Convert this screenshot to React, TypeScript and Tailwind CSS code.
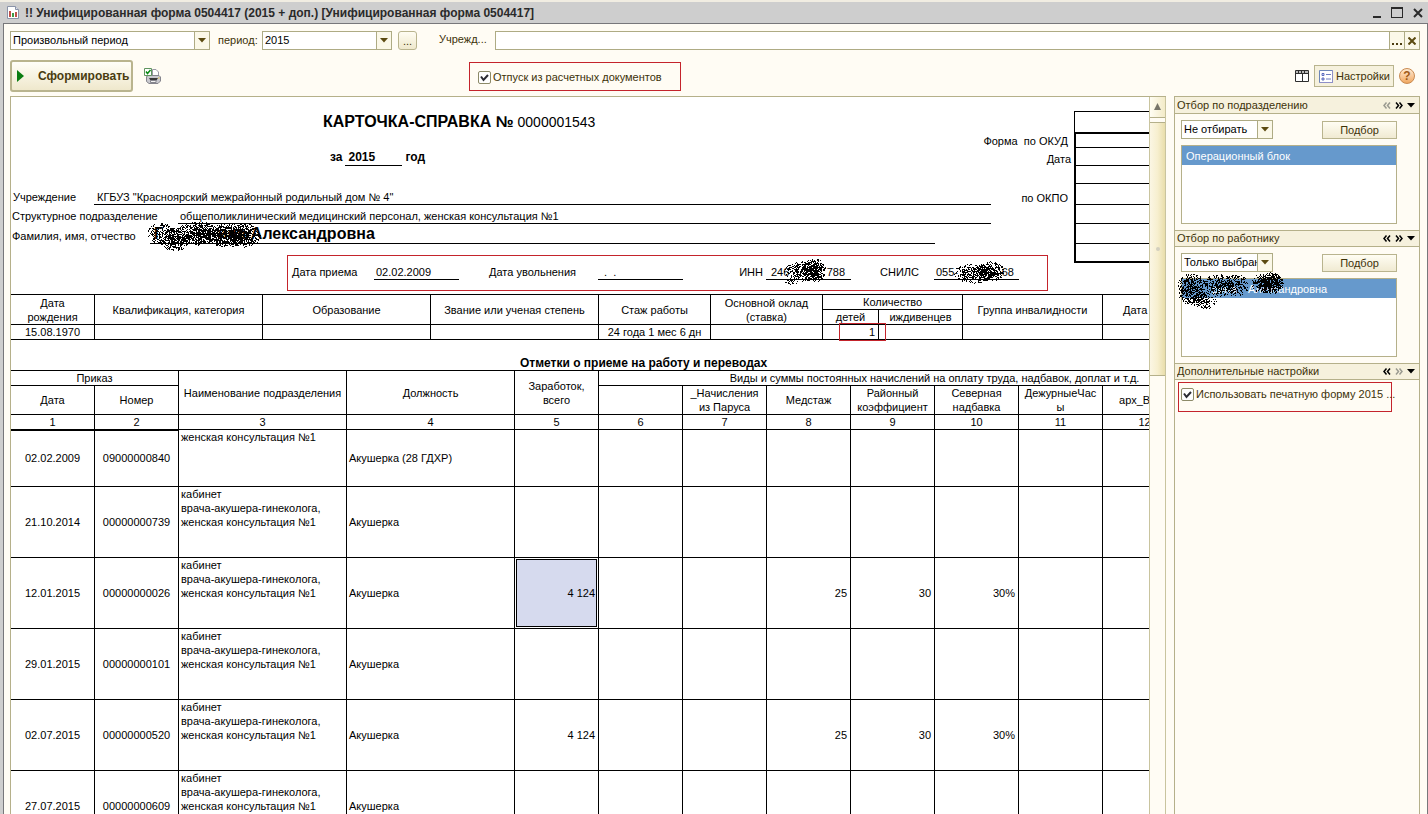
import { useId, useState, type ReactNode } from "react";

const UI_FONT = "font-['Liberation_Sans',Arial,sans-serif]";

/* ---------- small drawings ---------- */

function ArrowDown({ className = "" }: { className?: string }) {
  return (
    <svg width="8" height="5" viewBox="0 0 8 5" className={className} aria-hidden="true">
      <path d="M0 0h8L4 4.5z" fill="currentColor" />
    </svg>
  );
}

function Chevrons({ flip = false, dim = false }: { flip?: boolean; dim?: boolean }) {
  return (
    <svg width="8" height="7" viewBox="0 0 8 7" aria-hidden="true" className={flip ? "-scale-x-100" : ""}>
      <path
        d="M3.5 .5l-2.5 3 2.5 3M7 .5l-2.5 3L7 6.5"
        fill="none"
        stroke={dim ? "#9a9a90" : "#000"}
        strokeWidth="1.5"
      />
    </svg>
  );
}

function ReportIcon() {
  return (
    <svg width="12" height="13" viewBox="0 0 12 13" aria-hidden="true">
      <path d="M.5 .5h8l3 3v9H.5z" fill="#fff" stroke="#8a93a8" />
      <path d="M8.5 .5v3h3" fill="#dfe4ee" stroke="#8a93a8" />
      <path d="M2 5h2v6H2z" fill="#c0504b" />
      <path d="M5 7h2v4H5z" fill="#3f9b46" />
      <path d="M8 6h2v5H8z" fill="#c0504b" />
    </svg>
  );
}

function PrinterIcon() {
  return (
    <svg width="17" height="16" viewBox="0 0 17 16" aria-hidden="true">
      <path d="M8.5 1.5h3.5l2.5 2.5v5h-6z" fill="#fff" stroke="#9a9aa4" />
      <path d="M2.5 8.500l2-1h10.500l1.500 1.500v4l-2.500 2.500H5l-2.500-2z" fill="#c9c9cf" stroke="#85858d" />
      <path d="M5 10h9l-1.500 2.500h-6z" fill="#3a3a3a" />
      <path d="M6.500 12.500h5.500v2h-5.500z" fill="#f4f4f4" stroke="#85858d" />
      <path d="M14 9.500h1.500v1H14z" fill="#e0c040" />
      <path d="M.5 .5h7v7h-7z" fill="#fff" stroke="#5f955f" />
      <path d="M2 3.500l1.500 2L6.500 2" fill="none" stroke="#0a8a14" strokeWidth="1.500" />
    </svg>
  );
}

function TableIcon() {
  return (
    <svg width="14" height="12" viewBox="0 0 14 12" aria-hidden="true">
      <path d="M.5 .5h13v11H.5z" fill="#fff" stroke="#2e2e2e" />
      <path d="M1 1h12v2.500H1z" fill="#b9b9b9" />
      <path d="M.5 3.500h13M7.500 3.500v8" stroke="#2e2e2e" fill="none" />
      <path d="M3.500 1v2M6.500 1v2M9.500 1v2" stroke="#2e2e2e" fill="none" />
    </svg>
  );
}

function SettingsIcon() {
  return (
    <svg width="14" height="13" viewBox="0 0 14 13" aria-hidden="true">
      <path d="M.5 .5h13v12H.5z" fill="#fff" stroke="#6d86b8" />
      <path d="M.5 12.500h13V.5" fill="none" stroke="#8f8fc8" />
      <path d="M3 3.500h2v2H3zM3 8h2v2H3z" fill="#dfe6ff" stroke="#3c4fb0" strokeWidth=".8" />
      <path d="M7 4.500h5M7 9h5" stroke="#6d7cc0" fill="none" />
    </svg>
  );
}

type Blob = { cx: number; cy: number; rx: number; ry: number; density: number };

// Speckled marker strokes, seeded so that they come out the same on every render
function specklePath(blobs: Blob[], seed: number) {
  let s = seed;
  const rnd = () => {
    s = (s * 1664525 + 1013904223) % 4294967296;
    return s / 4294967296;
  };
  let d = "";
  for (const b of blobs) {
    for (let y = -b.ry; y <= b.ry; y++) {
      for (let x = -b.rx; x <= b.rx; x++) {
        const r = (x / b.rx) ** 2 + (y / b.ry) ** 2;
        if (r > 1) continue;
        if (rnd() < b.density * (1.15 - r * 0.7)) d += `M${b.cx + x} ${b.cy + y}h1v1h-1z`;
      }
    }
  }
  return d;
}

function Scribble({ w, h, blobs, seed, className }: { w: number; h: number; blobs: Blob[]; seed: number; className: string }) {
  return (
    <svg
      width={w}
      height={h}
      viewBox={`0 0 ${w} ${h}`}
      shapeRendering="crispEdges"
      aria-hidden="true"
      className={`pointer-events-none absolute ${className}`}
    >
      <path d={specklePath(blobs, seed)} fill="#000" />
    </svg>
  );
}

/* ---------- controls ---------- */

function Combo({ label, options, className }: { label: string; options: string[]; className: string }) {
  return (
    <div className={`relative flex h-[19px] shrink-0 overflow-hidden border border-[#aeab84] bg-white ${className}`}>
      <select
        aria-label={label}
        className="w-full appearance-none bg-transparent pl-[2px] text-[11px] leading-[17px] text-black outline-none"
      >
        {options.map((o) => (
          <option key={o}>{o}</option>
        ))}
      </select>
      <span className="pointer-events-none flex w-[15px] shrink-0 items-center justify-center border-l border-[#aeab84] bg-[#fbf8e8] text-[#5b4a10]">
        <ArrowDown />
      </span>
    </div>
  );
}

function CheckBox({ label, className = "" }: { label: string; className?: string }) {
  const id = useId();
  const [on, setOn] = useState(true);
  return (
    <div className={`flex items-center gap-[2px] border border-[#c4242c] whitespace-nowrap ${className}`}>
      <span className="relative flex size-[13px] shrink-0">
        <input
          id={id}
          type="checkbox"
          checked={on}
          onChange={(e) => setOn(e.target.checked)}
          className="size-[13px] appearance-none rounded-[2px] border border-[#8c8a68] bg-white"
        />
        {on && (
          <svg width="13" height="13" viewBox="0 0 13 13" className="pointer-events-none absolute inset-0" aria-hidden="true">
            <path d="M3 5.500l2.500 3.500L10 4" fill="none" stroke="#2b2b33" strokeWidth="2" />
          </svg>
        )}
      </span>
      <label htmlFor={id}>{label}</label>
    </div>
  );
}

function PickButton() {
  return (
    <button
      type="button"
      className="h-[18px] w-[75px] border border-[#b9b48e] bg-linear-to-b from-[#fffdf3] to-[#f0ead2] leading-[16px]"
    >
      Подбор
    </button>
  );
}

function Section({
  title,
  first = false,
  last = false,
  children,
}: {
  title: string;
  first?: boolean;
  last?: boolean;
  children: ReactNode;
}) {
  return (
    <section>
      <header
        className={`flex h-[17px] items-center gap-[4px] border-b border-[#b5b08a] bg-[#f6f1dd] pr-[4px] pl-[2px] ${
          first ? "" : "border-t"
        }`}
      >
        <h2 className="flex-1 truncate leading-[15px]">{title}</h2>
        <button type="button" aria-label="Вверх">
          <Chevrons dim={first} />
        </button>
        <button type="button" aria-label="Вниз">
          <Chevrons flip dim={last} />
        </button>
        <button type="button" aria-label="Меню" className="text-black">
          <ArrowDown />
        </button>
      </header>
      {children}
    </section>
  );
}

/* ---------- printed form ---------- */

function FormRow({
  height,
  code = "",
  label,
  children,
}: {
  height: string;
  code?: string;
  label?: string;
  children?: ReactNode;
}) {
  return (
    <div className={`flex ${height}`}>
      <div className="flex w-[980px] shrink-0 items-stretch">{children}</div>
      <div className="flex w-[83px] shrink-0 items-end justify-end pr-[3px] whitespace-pre">{label}</div>
      <div className={`w-[160px] shrink-0 border-black ${code}`} />
    </div>
  );
}

const CODE_CELL = "border-l-2 border-b";

const cell = "border-r border-b border-black p-0";

function PersonTable() {
  return (
    <table className="w-[1260px] table-fixed border-separate border-spacing-0 border-t border-black text-center">
      <colgroup>
        <col className="w-[84px]" />
        <col className="w-[168px]" />
        <col className="w-[168px]" />
        <col className="w-[168px]" />
        <col className="w-[112px]" />
        <col className="w-[112px]" />
        <col className="w-[56px]" />
        <col className="w-[84px]" />
        <col className="w-[140px]" />
        <col className="w-[168px]" />
      </colgroup>
      <thead>
        <tr className="h-[15px]">
          <th rowSpan={2} className={`${cell} px-3 font-normal`}>Дата рождения</th>
          <th rowSpan={2} className={`${cell} font-normal`}>Квалификация, категория</th>
          <th rowSpan={2} className={`${cell} font-normal`}>Образование</th>
          <th rowSpan={2} className={`${cell} font-normal`}>Звание или ученая степень</th>
          <th rowSpan={2} className={`${cell} font-normal`}>Стаж работы</th>
          <th rowSpan={2} className={`${cell} font-normal`}>
            Основной оклад
            <br />
            (ставка)
          </th>
          <th colSpan={2} className={`${cell} font-normal`}>Количество</th>
          <th rowSpan={2} className={`${cell} font-normal`}>Группа инвалидности</th>
          <th rowSpan={2} className={`${cell} pl-5 text-left font-normal`}>Дата</th>
        </tr>
        <tr className="h-[15px]">
          <th className={`${cell} font-normal`}>детей</th>
          <th className={`${cell} font-normal`}>иждивенцев</th>
        </tr>
      </thead>
      <tbody>
        <tr className="h-[15px]">
          <td className={cell}>15.08.1970</td>
          <td className={cell} />
          <td className={cell} />
          <td className={cell} />
          <td className={cell}>24 года 1 мес 6 дн</td>
          <td className={cell} />
          <td className={`${cell} relative pr-[3px] text-right`}>
            1
            {/* highlight */}
            <span className="absolute -top-[2px] left-[16px] z-10 h-[18px] w-[47px] border border-[#c4242c]" />
          </td>
          <td className={cell} />
          <td className={cell} />
          <td className={cell} />
        </tr>
      </tbody>
    </table>
  );
}

type Transfer = {
  date: string;
  number: string;
  dept: string[];
  post: string;
  pay?: string;
  stage?: string;
  region?: string;
  north?: string;
  selected?: boolean;
};

const CABINET = ["кабинет", "врача-акушера-гинеколога,", "женская консультация №1"];

const TRANSFERS: Transfer[] = [
  { date: "02.02.2009", number: "09000000840", dept: ["женская консультация №1"], post: "Акушерка (28 ГДХР)" },
  { date: "21.10.2014", number: "00000000739", dept: CABINET, post: "Акушерка" },
  {
    date: "12.01.2015",
    number: "00000000026",
    dept: CABINET,
    post: "Акушерка",
    pay: "4 124",
    stage: "25",
    region: "30",
    north: "30%",
    selected: true,
  },
  { date: "29.01.2015", number: "00000000101", dept: CABINET, post: "Акушерка" },
  {
    date: "02.07.2015",
    number: "00000000520",
    dept: CABINET,
    post: "Акушерка",
    pay: "4 124",
    stage: "25",
    region: "30",
    north: "30%",
  },
  { date: "27.07.2015", number: "00000000609", dept: CABINET, post: "Акушерка" },
];

const COLUMN_NUMBERS = ["1", "2", "3", "4", "5", "6", "7", "8", "9", "10", "11", "12", ""];

function TransfersTable() {
  return (
    <table className="w-[1260px] table-fixed border-separate border-spacing-0 border-t border-black text-center">
      <colgroup>
        <col className="w-[84px]" />
        <col className="w-[84px]" />
        <col className="w-[168px]" />
        <col className="w-[168px]" />
        {COLUMN_NUMBERS.slice(4).map((n) => (
          <col key={n} className="w-[84px]" />
        ))}
      </colgroup>
      <thead>
        <tr className="h-[15px]">
          <th colSpan={2} className={`${cell} font-normal`}>Приказ</th>
          <th rowSpan={2} className={`${cell} font-normal`}>Наименование подразделения</th>
          <th rowSpan={2} className={`${cell} font-normal`}>Должность</th>
          <th rowSpan={2} className={`${cell} font-normal`}>
            Заработок,
            <br />
            всего
          </th>
          <th colSpan={8} className={`${cell} font-normal`}>
            Виды и суммы постоянных начислений на оплату труда, надбавок, доплат и т.д.
          </th>
        </tr>
        <tr className="h-[29px]">
          <th className={`${cell} font-normal`}>Дата</th>
          <th className={`${cell} font-normal`}>Номер</th>
          <th className={`${cell} font-normal`} />
          <th className={`${cell} font-normal`}>
            _Начисления
            <br />
            из Паруса
          </th>
          <th className={`${cell} font-normal`}>Медстаж</th>
          <th className={`${cell} font-normal`}>
            Районный
            <br />
            коэффициент
          </th>
          <th className={`${cell} font-normal`}>
            Северная
            <br />
            надбавка
          </th>
          <th className={`${cell} font-normal`}>
            ДежурныеЧас
            <br />ы
          </th>
          <th className={`${cell} pl-4 text-left font-normal`}>арх_В</th>
          <th className={`${cell} font-normal`} />
        </tr>
        <tr className="h-[15px]">
          {COLUMN_NUMBERS.map((n, i) => (
            <th key={n} className={`${cell} font-normal ${i < 2 ? "shadow-[0_1px_0_#000]" : ""}`}>
              {n}
            </th>
          ))}
        </tr>
      </thead>
      <tbody>
        {TRANSFERS.map((t, i) => (
          <tr key={t.number} className={i === 0 ? "h-[57px]" : "h-[71px]"}>
            <td className={cell}>{t.date}</td>
            <td className={cell}>{t.number}</td>
            <td className={`${cell} pl-[2px] text-left align-top`}>
              {t.dept.map((line) => (
                <div key={line}>{line}</div>
              ))}
            </td>
            <td className={`${cell} pl-[2px] text-left`}>{t.post}</td>
            <td className={`${cell} relative pr-[3px] text-right`}>
              {t.selected ? (
                <div className="absolute -inset-px border border-black bg-white p-px">
                  <div className="flex h-full items-center justify-end border border-black bg-[#d6daee] pr-[1px]">
                    {t.pay}
                  </div>
                </div>
              ) : (
                t.pay
              )}
            </td>
            <td className={cell} />
            <td className={cell} />
            <td className={`${cell} pr-[3px] text-right`}>{t.stage}</td>
            <td className={`${cell} pr-[3px] text-right`}>{t.region}</td>
            <td className={`${cell} pr-[3px] text-right`}>{t.north}</td>
            <td className={cell} />
            <td className={cell} />
            <td className={cell} />
          </tr>
        ))}
      </tbody>
    </table>
  );
}

function Sheet() {
  return (
    <div className="relative w-[1260px] text-[11px] leading-[14px] text-black">
      <div className="h-[14px]" />
      <FormRow height="h-[21px]" code="border-t border-l">
        <h1 className="flex items-center gap-[4px] pl-[312px] text-[16px] font-bold">
          КАРТОЧКА-СПРАВКА №<span className="text-[14px] font-normal">0000001543</span>
        </h1>
      </FormRow>
      <FormRow height="h-[16px]" code="border-l-2 border-t-2 border-b" label="Форма  по ОКУД " />
      <FormRow height="h-[18px]" code={CODE_CELL} label="Дата">
        <div className="flex gap-[3px] pl-[319px] text-[12px] leading-[18px] font-bold">
          <span>за</span>
          <span className="w-[57px] border-b border-black pl-[3px]">2015</span>
          <span>год</span>
        </div>
      </FormRow>
      <FormRow height="h-[18px]" code={CODE_CELL} />
      <FormRow height="h-[21px]" code={CODE_CELL} label="по ОКПО ">
        <span className="w-[83px] pt-[6px] pl-[2px]">Учреждение</span>
        <span className="flex-1 border-b border-black pt-[6px] pl-[3px]">
          КГБУЗ "Красноярский межрайонный родильный дом № 4"
        </span>
      </FormRow>
      <FormRow height="h-[19px]" code={CODE_CELL}>
        <span className="w-[167px] pt-[4px] pl-[1px]">Структурное подразделение</span>
        <span className="flex-1 border-b border-black pt-[4px] pl-[2px]">
          общеполиклинический медицинский персонал, женская консультация №1
        </span>
      </FormRow>
      <FormRow height="h-[20px]" code={CODE_CELL}>
        <span className="w-[139px] pt-[5px] pl-[1px]">Фамилия, имя, отчество</span>
        <span className="relative flex w-[785px] border-b border-black pl-[4px] text-[16px] leading-[19px] font-bold">
          <span className="w-[64px]">Г</span>
          <span>ина Александровна</span>
          <Scribble
            w={120}
            h={34}
            seed={17}
            className="-top-[5px] -left-[4px]"
            blobs={[
              { cx: 14, cy: 14, rx: 13, ry: 11, density: 0.42 },
              { cx: 28, cy: 20, rx: 16, ry: 12, density: 0.65 },
              { cx: 52, cy: 14, rx: 22, ry: 12, density: 0.7 },
              { cx: 80, cy: 16, rx: 22, ry: 12, density: 0.65 },
              { cx: 98, cy: 16, rx: 17, ry: 12, density: 0.6 },
            ]}
          />
        </span>
      </FormRow>
      <FormRow height="h-[19px]" code="border-l-2 border-b-2" />
      <div className="flex h-[17px] pl-[281px] leading-[18px]">
        <span className="w-[82px]">Дата приема</span>
        <span className="w-[85px] border-b border-black pl-[2px]">02.02.2009</span>
        <span className="w-[139px] pl-[30px]">Дата увольнения</span>
        <span className="w-[85px] border-b border-black pl-[6px] whitespace-pre">.  .</span>
        <span className="w-[83px] pr-[3px] text-right">ИНН</span>
        <span className="relative flex w-[85px] justify-between border-b border-black pr-[6px] pl-[5px]">
          <span>246</span>
          <span>788</span>
          <Scribble
            w={56}
            h={30}
            seed={5}
            className="-top-[6px] left-[14px]"
            blobs={[
              { cx: 22, cy: 14, rx: 18, ry: 10, density: 0.55 },
              { cx: 34, cy: 13, rx: 12, ry: 12, density: 0.7 },
              { cx: 12, cy: 25, rx: 8, ry: 3, density: 0.3 },
            ]}
          />
        </span>
        <span className="w-[83px] pl-[29px]">СНИЛС</span>
        <span className="relative flex w-[85px] justify-between border-b border-black pr-[5px] pl-[2px]">
          <span>055-</span>
          <span>68</span>
          <Scribble
            w={56}
            h={28}
            seed={41}
            className="-top-[4px] left-[18px]"
            blobs={[
              { cx: 22, cy: 14, rx: 21, ry: 10, density: 0.5 },
              { cx: 38, cy: 12, rx: 14, ry: 10, density: 0.65 },
            ]}
          />
        </span>
      </div>
      {/* highlight round the dates and numbers */}
      <div className="pointer-events-none absolute top-[158px] left-[276px] h-[36px] w-[761px] border border-[#c4242c]" />
      <div className="h-[14px]" />
      <PersonTable />
      <h2 className="pt-[16px] pl-[509px] text-[12px] leading-[14px] font-bold">
        Отметки о приеме на работу и переводах
      </h2>
      <TransfersTable />
    </div>
  );
}

function VerticalScroll() {
  return (
    <div className="flex w-[17px] shrink-0 flex-col border-x border-[#c9c49e] bg-[#fffcf4]">
      <button
        type="button"
        aria-label="Прокрутить вверх"
        className="flex h-[21px] justify-center border-b border-[#b5b08a] bg-linear-to-r from-[#fffdf3] to-[#f3ebc8] pt-[6px]"
      >
        <svg width="7" height="7" viewBox="0 0 7 7" aria-hidden="true">
          <path d="M3.500 0L7 7H0z" fill="#77756a" />
        </svg>
      </button>
      <div className="mt-[4px] flex h-[254px] items-center justify-center border-y border-[#b5b08a] bg-linear-to-r from-[#fbf6e4] via-[#f7efcf] to-[#e9deab]">
        <span className="size-[4px] rounded-full bg-[#d3cfbe]" />
      </div>
    </div>
  );
}

/* ---------- side panel ---------- */

function SidePanel() {
  return (
    <aside className="w-[246px] shrink-0 border border-b-0 border-[#b5b08a] bg-[#fffcf4]">
      <Section title="Отбор по подразделению" first>
        <div className="flex flex-col gap-[6px] py-[6px] pr-[22px] pl-[6px]">
          <div className="flex items-center justify-between">
            <Combo label="Вид отбора по подразделению" options={["Не отбирать", "Только выбранные"]} className="w-[92px]" />
            <PickButton />
          </div>
          <ul className="h-[79px] border border-[#b5b08a] bg-white">
            <li className="h-[19px] bg-[#6699cc] pl-[4px] leading-[20px] text-white">Операционный блок</li>
          </ul>
        </div>
      </Section>
      <Section title="Отбор по работнику">
        <div className="flex flex-col gap-[6px] py-[6px] pr-[22px] pl-[6px]">
          <div className="flex items-center justify-between">
            <Combo label="Вид отбора по работнику" options={["Только выбранные", "Не отбирать"]} className="w-[92px]" />
            <PickButton />
          </div>
          <ul className="relative h-[79px] border border-[#b5b08a] bg-white">
            <li className="flex h-[19px] bg-[#6699cc] pl-[30px] leading-[20px] text-white">
              <span className="w-[36px]">рина</span>
              <span>Александровна</span>
            </li>
            <Scribble
              w={114}
              h={42}
              seed={9}
              className="-top-[8px] -left-[6px]"
              blobs={[
                { cx: 15, cy: 14, rx: 14, ry: 12, density: 0.5 },
                { cx: 17, cy: 24, rx: 15, ry: 10, density: 0.55 },
                { cx: 28, cy: 30, rx: 12, ry: 8, density: 0.4 },
                { cx: 42, cy: 14, rx: 14, ry: 12, density: 0.55 },
                { cx: 60, cy: 14, rx: 13, ry: 11, density: 0.5 },
                { cx: 84, cy: 12, rx: 9, ry: 9, density: 0.4 },
                { cx: 94, cy: 12, rx: 13, ry: 11, density: 0.8 },
              ]}
            />
          </ul>
        </div>
      </Section>
      <Section title="Дополнительные настройки" last>
        <div className="pt-[2px] pr-[27px] pl-[3px]">
          <CheckBox label="Использовать печатную форму 2015 ..." className="h-[30px] pb-[5px] pl-[2px]" />
        </div>
      </Section>
    </aside>
  );
}

/* ---------- window ---------- */

export default function App() {
  return (
    <div className={`flex h-screen flex-col overflow-hidden bg-[#cecece] text-[11px] text-[#3d3209] ${UI_FONT}`}>
      <div className="h-[2px] shrink-0 bg-[#f1ede2]" />
      <header className="flex h-[21px] shrink-0 items-center gap-[6px] pr-[5px] pl-[7px] text-[#2a2a2a]">
        <ReportIcon />
        <h1 className="flex-1 truncate text-[12px] font-bold">
          !! Унифицированная форма 0504417 (2015 + доп.) [Унифицированная форма 0504417]
        </h1>
        <div className="flex items-center gap-[10px]">
          <button type="button" aria-label="Свернуть" className="flex h-[11px] w-[8px] items-end">
            <span className="h-[2px] w-full bg-[#2a2a2a]" />
          </button>
          <button type="button" aria-label="Развернуть" className="h-[11px] w-[12px] border border-t-2 border-[#2a2a2a]" />
          <button type="button" aria-label="Закрыть">
            <svg width="10" height="10" viewBox="0 0 10 10" aria-hidden="true">
              <path d="M1 1l8 8M9 1L1 9" stroke="#2a2a2a" strokeWidth="2" />
            </svg>
          </button>
        </div>
      </header>

      <main className="ml-[3px] flex min-h-0 flex-1 flex-col border-x border-t border-[#77777a] bg-[#fffcf4] pr-[7px] pl-[6px]">
        {/* period and organisation */}
        <div className="mt-[7px] flex h-[19px] shrink-0 items-center">
          <Combo label="Вид периода" options={["Произвольный период"]} className="w-[200px]" />
          <label htmlFor="period" className="w-[52px] pl-[8px]">
            период:
          </label>
          <div className="flex h-[19px] w-[130px] border border-[#aeab84] bg-white">
            <input id="period" defaultValue="2015" className="w-full min-w-0 pl-[2px] text-black outline-none" />
            <button
              type="button"
              aria-label="Выбрать год"
              className="flex w-[15px] shrink-0 items-center justify-center border-l border-[#aeab84] bg-[#fbf8e8] text-[#5b4a10]"
            >
              <ArrowDown />
            </button>
          </div>
          <button
            type="button"
            className="ml-[6px] h-[19px] w-[19px] rounded-[3px] border border-[#b9b48e] bg-linear-to-b from-[#fffdf3] to-[#efe8cc] leading-[16px]"
          >
            ...
          </button>
          <label htmlFor="org" className="w-[78px] pb-[3px] pl-[22px]">
            Учрежд...
          </label>
          <div className="flex h-[19px] min-w-0 flex-1 border border-[#aeab84] bg-white">
            <input id="org" className="min-w-0 flex-1 px-[2px] text-black outline-none" />
            <button type="button" aria-label="Выбрать" className="flex w-[15px] items-end justify-center gap-[2px] border-l border-[#aeab84] bg-[#fbf8e8] pb-[4px]">
              <span className="size-[2px] bg-[#4a3c10]" />
              <span className="size-[2px] bg-[#4a3c10]" />
              <span className="size-[2px] bg-[#4a3c10]" />
            </button>
            <button type="button" aria-label="Очистить" className="flex w-[15px] items-center justify-center border-l border-[#aeab84] bg-[#fbf8e8]">
              <svg width="8" height="8" viewBox="0 0 8 8" aria-hidden="true">
                <path d="M.5 .5l7 7M7.500 .5l-7 7" stroke="#5b4a10" strokeWidth="2" />
              </svg>
            </button>
          </div>
        </div>

        {/* commands */}
        <div className="mt-[10px] flex h-[32px] shrink-0 items-center">
          <button
            type="button"
            className="flex h-[32px] w-[123px] items-center gap-[14px] rounded-[3px] border-2 border-[#b9b48e] bg-linear-to-b from-[#fffef8] to-[#efe8cc] pl-[5px] text-[12px] font-bold text-[#4a3c10]"
          >
            <svg width="7" height="12" viewBox="0 0 7 12" className="shrink-0" aria-hidden="true">
              <path d="M0 0l7 6-7 6z" fill="#0a7d12" />
            </svg>
            Сформировать
          </button>
          <button type="button" aria-label="Печать" className="ml-[11px]">
            <PrinterIcon />
          </button>
          <CheckBox label="Отпуск из расчетных документов" className="ml-[308px] h-[29px] w-[212px] pt-[2px] pl-[8px]" />
          <div className="ml-auto flex items-center gap-[5px] pr-[5px]">
            <button type="button" aria-label="Таблица">
              <TableIcon />
            </button>
            <button type="button" className="flex h-[22px] w-[80px] items-center gap-[3px] border border-[#b9b48e] bg-[#f6f1dd] pl-[4px]">
              <SettingsIcon />
              Настройки
            </button>
            <button
              type="button"
              aria-label="Справка"
              className="size-[16px] rounded-full border border-[#c98a50] bg-linear-to-b from-[#ffe9d0] to-[#f0a860] text-[12px] leading-[14px] font-bold text-[#a05a18]"
            >
              ?
            </button>
          </div>
        </div>

        {/* document and filters */}
        <div className="mt-[4px] flex min-h-0 flex-1 items-stretch gap-[8px]">
          <div className="flex min-w-0 flex-1 border-t border-l border-[#b5b08a] bg-white">
            <div className="min-w-0 flex-1 overflow-hidden">
              <Sheet />
            </div>
            <VerticalScroll />
          </div>
          <SidePanel />
        </div>
      </main>
    </div>
  );
}
